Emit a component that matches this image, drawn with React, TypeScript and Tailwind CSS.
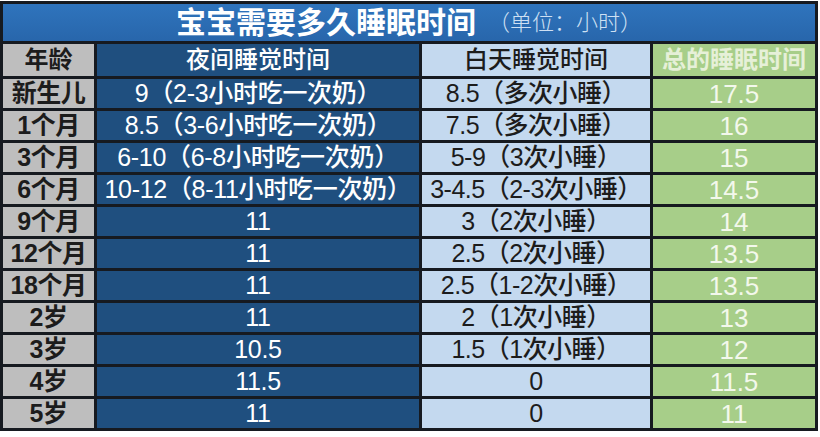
const rows: [string, string, string, string][] = [
  ["新生儿", "9（2-3小时吃一次奶）", "8.5（多次小睡）", "17.5"],
  ["1个月", "8.5（3-6小时吃一次奶）", "7.5（多次小睡）", "16"],
  ["3个月", "6-10（6-8小时吃一次奶）", "5-9（3次小睡）", "15"],
  ["6个月", "10-12（8-11小时吃一次奶）", "3-4.5（2-3次小睡）", "14.5"],
  ["9个月", "11", "3（2次小睡）", "14"],
  ["12个月", "11", "2.5（2次小睡）", "13.5"],
  ["18个月", "11", "2.5（1-2次小睡）", "13.5"],
  ["2岁", "11", "2（1次小睡）", "13"],
  ["3岁", "10.5", "1.5（1次小睡）", "12"],
  ["4岁", "11.5", "0", "11.5"],
  ["5岁", "11", "0", "11"],
];

const font = "font-['Liberation_Sans','Noto_Sans_CJK_SC',sans-serif]";

export default function App() {
  return (
    <div className="w-[820px] h-[437px] bg-white pt-[1px]">
      <div
        className={`w-[818px] grid grid-cols-[91px_322px_228px_162px] gap-[3px] border-[3px] border-[#161a20] bg-[#161a20] ${font}`}
      >
        {/* Title */}
        <div className="col-span-4 h-[37px] bg-gradient-to-b from-[#2f74bd] to-[#2866ab] flex items-center justify-center gap-3">
          <span className="text-[30px] leading-none font-bold text-white">
            宝宝需要多久睡眠时间
          </span>
          <span className="text-[22px] leading-none text-[#cfe0f3] font-light">
            （单位：小时）
          </span>
        </div>

        {/* Header */}
        <div className="h-[32px] bg-[#bebebe] flex items-center justify-center text-[24px] leading-none font-bold text-[#1c1c1c]">
          年龄
        </div>
        <div className="h-[32px] bg-[#1f4f7f] flex items-center justify-center text-[24px] leading-none font-medium text-white">
          夜间睡觉时间
        </div>
        <div className="h-[32px] bg-[#c4d9ef] flex items-center justify-center text-[24px] leading-none font-medium text-[#1c1c1c]">
          白天睡觉时间
        </div>
        <div className="h-[32px] bg-[#a7ce89] flex items-center justify-center text-[24px] leading-none font-bold text-[#e6f0d8]">
          总的睡眠时间
        </div>

        {rows.map(([age, night, day, total]) => (
          <div key={age} className="contents">
            <div className="h-[29px] bg-[#bebebe] flex items-center justify-center text-[25px] leading-none font-bold text-[#1c1c1c] whitespace-nowrap tracking-[-0.5px]">
              {age}
            </div>
            <div className="h-[29px] bg-[#1f4f7f] flex items-center justify-center text-[25px] leading-none font-medium text-white whitespace-nowrap tracking-[-0.3px]">
              {night}
            </div>
            <div className="h-[29px] bg-[#c4d9ef] flex items-center justify-center text-[25px] leading-none font-medium text-[#1c1c1c] whitespace-nowrap tracking-[-0.5px]">
              {day}
            </div>
            <div className="h-[29px] bg-[#a7ce89] flex items-center justify-center text-[26px] leading-none font-medium text-[#f3f8ec]">
              {total}
            </div>
          </div>
        ))}
      </div>
    </div>
  );
}
